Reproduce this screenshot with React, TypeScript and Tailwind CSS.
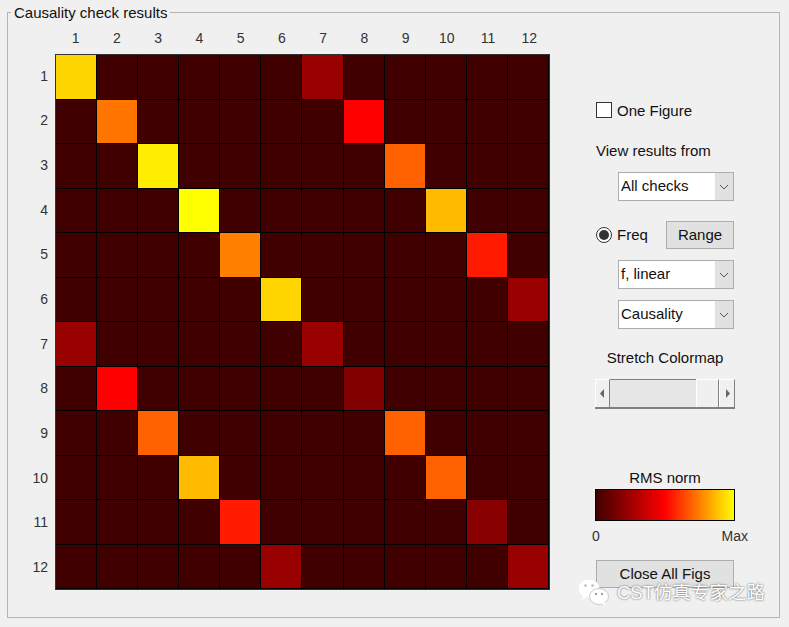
const B = "#400000";
const special: Record<string, string> = {
  "0-0": "#ffd500", "0-6": "#990000",
  "1-1": "#ff7500", "1-7": "#ff0000",
  "2-2": "#ffee00", "2-8": "#ff6000",
  "3-3": "#ffff00", "3-9": "#ffbb00",
  "4-4": "#ff8000", "4-10": "#ff1a00",
  "5-5": "#ffd500", "5-11": "#990000",
  "6-0": "#990000", "6-6": "#990000",
  "7-1": "#ff0000", "7-7": "#800000",
  "8-2": "#ff6000", "8-8": "#ff6000",
  "9-3": "#ffbb00", "9-9": "#ff6000",
  "10-4": "#ff1a00", "10-10": "#880000",
  "11-5": "#990000", "11-11": "#990000",
};
const nums = [1, 2, 3, 4, 5, 6, 7, 8, 9, 10, 11, 12];

function Select({ label, className }: { label: string; className: string }) {
  return (
    <div className={`flex h-[29px] w-[116px] border border-[#adadad] bg-white ${className}`}>
      <div className="flex-1 pl-[2px] leading-[26px]">{label}</div>
      <div className="flex w-[18px] items-center justify-center bg-[#e1e1e1]">
        <svg width="10" height="6" viewBox="0 0 10 6" fill="none" stroke="#555" strokeWidth="1">
          <path d="M1 1l4 4 4-4" />
        </svg>
      </div>
    </div>
  );
}

function Wechat() {
  return (
    <svg width="32" height="27" viewBox="0 0 32 27" className="shrink-0">
      <ellipse cx="11" cy="9.5" rx="10.5" ry="9" fill="#fff" />
      <path d="M5 15l-1 6 6-4z" fill="#fff" />
      <ellipse cx="21" cy="17.5" rx="9.5" ry="8" fill="#fff" stroke="#c9c9c9" strokeWidth="1" />
      <path d="M26 23l2 3-5-2z" fill="#fff" />
      <circle cx="7.5" cy="6.5" r="1.3" fill="#bbb" />
      <circle cx="14.5" cy="6.5" r="1.3" fill="#bbb" />
      <circle cx="18" cy="15" r="1.1" fill="#888" />
      <circle cx="24" cy="15" r="1.1" fill="#888" />
    </svg>
  );
}

export default function App() {
  return (
    <div
      className="h-[627px] w-[789px] overflow-hidden bg-[#f0f0f0] pl-[7px] pr-[9px] pt-[12px] text-[15px] text-[#111]"
      style={{ fontFamily: '"Liberation Sans", Arial, sans-serif' }}
    >
      <div className="relative flex h-[606px] w-[773px] border-[1.5px] border-[#b4b4b4]">
        <div className="absolute left-[3px] top-[-9px] bg-[#f0f0f0] px-[3px] text-[15px] leading-[18px]">Causality check results</div>

        <div className="ml-[7px] flex flex-col pt-[12px]">
          <div className="ml-[40px] grid h-[29px] w-[495px] grid-cols-12 text-center text-[14px] leading-[26px] text-[#333]">
            {nums.map((n) => <div key={n}>{n}</div>)}
          </div>
          <div className="flex">
            <div className="grid h-[536px] w-[40px] grid-rows-12 pr-[7px] text-right text-[14px] text-[#333]">
              {nums.map((n) => <div key={n} className="flex items-center justify-end">{n}</div>)}
            </div>
            <div className="grid h-[536px] w-[495px] grid-cols-12 grid-rows-12 border border-[#333] bg-black">
              {nums.map((_, r) =>
                nums.map((_, c) => (
                  <div
                    key={`${r}-${c}`}
                    className="border-b border-r border-black"
                    style={{ backgroundColor: special[`${r}-${c}`] ?? B }}
                  />
                ))
              )}
            </div>
          </div>
        </div>

        <div className="ml-[46px] flex w-[142px] flex-col pt-[88px]">
          <div className="flex h-[18px] items-center">
            <div className="h-[16px] w-[16px] border border-[#333] bg-white" />
            <span className="ml-[5px] pt-[2px]">One Figure</span>
          </div>
          <div className="mt-[22px] h-[19px] leading-[19px]">View results from</div>
          <Select label="All checks" className="ml-[22px] mt-[12px]" />
          <div className="mt-[20px] flex h-[28px] items-center">
            <div className="flex h-[16px] w-[16px] items-center justify-center rounded-full border border-[#333] bg-white">
              <div className="h-[10px] w-[10px] rounded-full bg-[#333]" />
            </div>
            <span className="ml-[5px] w-[49px]">Freq</span>
            <div className="flex h-[28px] w-[68px] items-center justify-center border border-[#adadad] bg-[#e1e1e1]">Range</div>
          </div>
          <Select label="f, linear" className="ml-[22px] mt-[11px]" />
          <Select label="Causality" className="ml-[22px] mt-[11px]" />
          <div className="-ml-[1px] mt-[19px] h-[19px] w-[140px] text-center leading-[19px]">Stretch Colormap</div>
          <div className="-ml-[1px] mt-[12px] flex h-[30px] w-[140px] border-b-2 border-[#808080]">
            <div className="flex w-[15px] items-center justify-center border-l border-r border-t border-l-white border-r-[#808080] border-t-white bg-[#f0f0f0]">
              <svg width="5" height="9" viewBox="0 0 5 9"><path d="M4 0v9L0 4.5z" fill="#666" /></svg>
            </div>
            <div className="w-[86px] border-t border-[#808080] bg-[#e6e6e6]" />
            <div className="w-[23px] border-l border-r border-t border-l-white border-r-[#808080] border-t-white bg-[#f0f0f0]" />
            <div className="flex flex-1 items-center justify-center border-l border-r border-t border-l-white border-r-[#808080] border-t-white bg-[#f0f0f0]">
              <svg width="5" height="9" viewBox="0 0 5 9"><path d="M1 0v9l4-4.5z" fill="#666" /></svg>
            </div>
          </div>
          <div className="-ml-[1px] mt-[59px] h-[19px] w-[140px] text-center leading-[19px]">RMS norm</div>
          <div
            className="-ml-[1px] mt-[2px] h-[32px] w-[140px] border border-black"
            style={{ background: "linear-gradient(to right,#400000 0%,#ff0000 50%,#ffff00 100%)" }}
          />
          <div className="-ml-[4px] mt-[6px] flex h-[18px] w-[156px] justify-between text-[14px] leading-[18px] text-[#333]">
            <span>0</span>
            <span>Max</span>
          </div>
          <div className="relative mt-[15px] h-[28px] w-[138px] border border-[#adadad] bg-[#e1e1e1] text-center leading-[26px]">
            Close All Figs
            <div className="absolute left-[-19px] top-[18px] flex items-center">
              <Wechat />
              <span
                className="ml-[7px] whitespace-nowrap text-[18.5px] leading-[24px] text-white [text-shadow:0_0_2px_#444]"
                style={{ fontFamily: '"Liberation Sans", "Noto Sans CJK SC", sans-serif' }}
              >
                CST仿真专家之路
              </span>
            </div>
          </div>
        </div>
      </div>
    </div>
  );
}
